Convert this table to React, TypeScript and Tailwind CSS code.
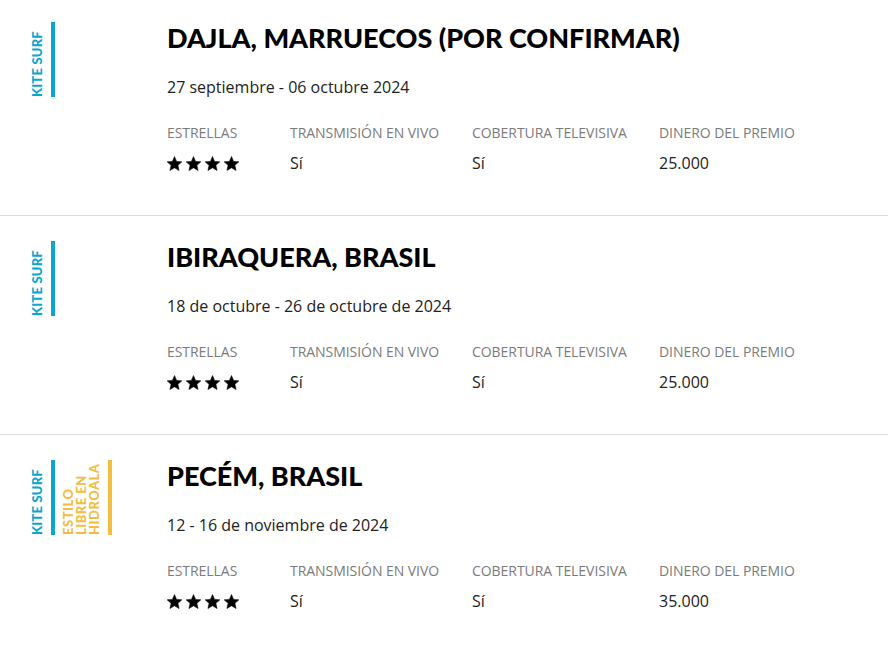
import React from "react";

type Tag = { text: string; color: "blue" | "yellow" };
type Event = {
  title: string;
  date: string;
  stars: number;
  live: string;
  tv: string;
  prize: string;
  tags: Tag[];
};

const events: Event[] = [
  {
    title: "DAJLA, MARRUECOS (POR CONFIRMAR)",
    date: "27 septiembre - 06 octubre 2024",
    stars: 4,
    live: "Sí",
    tv: "Sí",
    prize: "25.000",
    tags: [{ text: "KITE SURF", color: "blue" }],
  },
  {
    title: "IBIRAQUERA, BRASIL",
    date: "18 de octubre - 26 de octubre de 2024",
    stars: 4,
    live: "Sí",
    tv: "Sí",
    prize: "25.000",
    tags: [{ text: "KITE SURF", color: "blue" }],
  },
  {
    title: "PECÉM, BRASIL",
    date: "12 - 16 de noviembre de 2024",
    stars: 4,
    live: "Sí",
    tv: "Sí",
    prize: "35.000",
    tags: [
      { text: "KITE SURF", color: "blue" },
      { text: "ESTILO LIBRE EN HIDROALA", color: "yellow" },
    ],
  },
];

function Star() {
  return (
    <svg width="15" height="15" viewBox="1 1.2 22 21" className="block">
      <path
        d="M12 1.5l3.1 7.1 7.7.7-5.8 5.1 1.7 7.6L12 18l-6.7 4 1.7-7.6-5.8-5.1 7.7-.7z"
        fill="#000"
        stroke="#000"
        strokeWidth="0.8"
        strokeLinejoin="round"
      />
    </svg>
  );
}

function TagView({ tag }: { tag: Tag }) {
  const blue = tag.color === "blue";
  return (
    <div className="flex h-[75px] items-stretch gap-[7px]">
      <div
        className={`font-['Lato',sans-serif] font-black leading-[13px] ${
          blue
            ? "text-[13px] tracking-[0.2px] text-[#0aa6cf]"
            : "text-[13px] tracking-[0.5px] text-[#f4bd3f]"
        }`}
        style={{ writingMode: "vertical-rl", transform: "rotate(180deg)" }}
      >
        {tag.text}
      </div>
      <div className={`w-[4px] ${blue ? "bg-[#0aa6cf]" : "bg-[#f4bd3f]"}`} />
    </div>
  );
}

function Row({ e, first, last }: { e: Event; first: boolean; last: boolean }) {
  return (
    <div
      className={`flex pb-[40px] ${last ? "" : "border-b border-[#dcdcdc]"} ${
        first ? "pt-[22px]" : "pt-[25px]"
      }`}
    >
      <div className="flex w-[167px] shrink-0 gap-[7px] pl-[31px]">
        {e.tags.map((t, i) => (
          <TagView key={i} tag={t} />
        ))}
      </div>
      <div className="flex flex-col">
        <h2 className="font-['Lato',sans-serif] text-[27px] font-black leading-[32px] text-black">
          {e.title}
        </h2>
        <div className="mt-[21px] font-['Open_Sans',sans-serif] text-[16px] leading-[24px] text-[#222]">
          {e.date}
        </div>
        <div className="mt-[24px] flex font-['Open_Sans',sans-serif] text-[14px] leading-[20px] tracking-[-0.05px] text-[#7b7b7b]">
          <div className="w-[123px]">ESTRELLAS</div>
          <div className="w-[182px]">TRANSMISIÓN EN VIVO</div>
          <div className="w-[187px]">COBERTURA TELEVISIVA</div>
          <div>DINERO DEL PREMIO</div>
        </div>
        <div className="mt-[8px] flex h-[24px] items-center font-['Open_Sans',sans-serif] text-[16px] leading-[24px] text-[#222]">
          <div className="flex w-[123px] items-center gap-[4px]">
            {Array.from({ length: e.stars }).map((_, i) => (
              <Star key={i} />
            ))}
          </div>
          <div className="w-[182px]">{e.live}</div>
          <div className="w-[187px]">{e.tv}</div>
          <div>{e.prize}</div>
        </div>
      </div>
    </div>
  );
}

export default function App() {
  return (
    <div className="min-h-[654px] w-[888px] bg-white">
      {events.map((e, i) => (
        <Row key={i} e={e} first={i === 0} last={i === events.length - 1} />
      ))}
    </div>
  );
}
